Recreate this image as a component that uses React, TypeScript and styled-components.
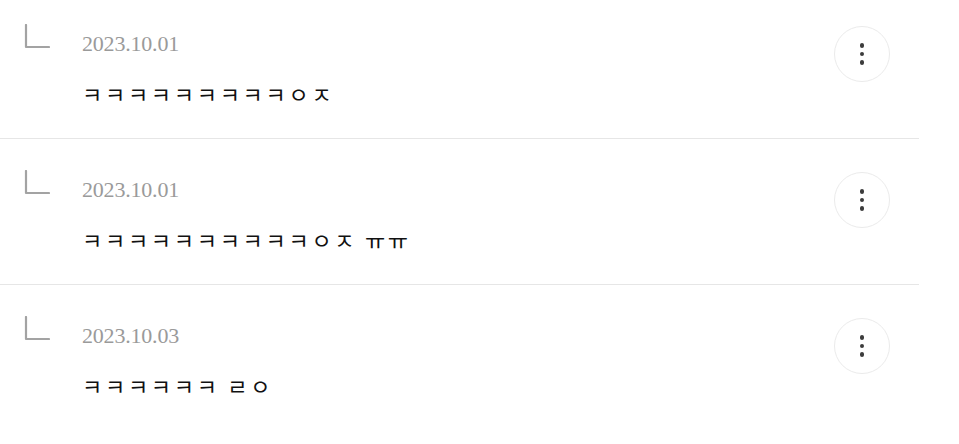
import React from "react";
import styled, { createGlobalStyle } from "styled-components";

const GlobalStyle = createGlobalStyle`
    body {
        margin: 0;
        background: #ffffff;
        font-family: "Noto Sans CJK KR", "Noto Sans", sans-serif;
    }
`;

const List = styled.ul`
    list-style: none;
    margin: -7px 0 0 0;
    padding: 0;
    width: 919px;
`;

const Row = styled.li`
    display: flex;
    align-items: flex-start;
    box-sizing: border-box;
    height: 146px;
    padding: 31px 29px 0 24px;
    border-bottom: 1px solid #e6e6e6;

    &:last-child {
        border-bottom: none;
    }
`;

const ReplyMark = styled.svg`
    flex: none;
    width: 26px;
    height: 25px;
`;

const Content = styled.div`
    flex: 1;
    display: flex;
    flex-direction: column;
    gap: 23px;
    margin-left: 32px;
    padding-top: 8px;
`;

const DateText = styled.span`
    font-family: "Liberation Serif", "Times New Roman", serif;
    font-size: 22px;
    line-height: 24px;
    color: #9a9a9a;
    letter-spacing: -0.2px;
`;

const Body = styled.p`
    margin: 0;
    font-family: "Noto Sans CJK KR", sans-serif;
    font-size: 22px;
    line-height: 28px;
    color: #111111;
    letter-spacing: 2.7px;
`;

const MoreButton = styled.button`
    flex: none;
    display: flex;
    flex-direction: column;
    align-items: center;
    justify-content: center;
    gap: 4px;
    width: 56px;
    height: 56px;
    margin-top: 2px;
    padding: 0;
    border: 1px solid #ebebeb;
    border-radius: 50%;
    background: #ffffff;
    cursor: pointer;
`;

const Dot = styled.span`
    width: 4.5px;
    height: 4.5px;
    border-radius: 50%;
    background: #3c3c3c;
`;

type Reply = {
    date: string;
    text: string;
};

const replies: Reply[] = [
    { date: "2023.10.01", text: "ㅋㅋㅋㅋㅋㅋㅋㅋㅋㅇㅈ" },
    { date: "2023.10.01", text: "ㅋㅋㅋㅋㅋㅋㅋㅋㅋㅋㅇㅈ ㅠㅠ" },
    { date: "2023.10.03", text: "ㅋㅋㅋㅋㅋㅋ ㄹㅇ" },
];

export default function App() {
    return (
        <>
            <GlobalStyle />
            <List>
                {replies.map((reply, index) => (
                    <Row key={index}>
                        <ReplyMark viewBox="0 0 26 25">
                            <path
                                d="M2 1 V23 H25"
                                fill="none"
                                stroke="#a3a3a3"
                                strokeWidth="2.2"
                                strokeLinecap="round"
                                strokeLinejoin="round"
                            />
                        </ReplyMark>
                        <Content>
                            <DateText>{reply.date}</DateText>
                            <Body>{reply.text}</Body>
                        </Content>
                        <MoreButton aria-label="더보기">
                            <Dot />
                            <Dot />
                            <Dot />
                        </MoreButton>
                    </Row>
                ))}
            </List>
        </>
    );
}
